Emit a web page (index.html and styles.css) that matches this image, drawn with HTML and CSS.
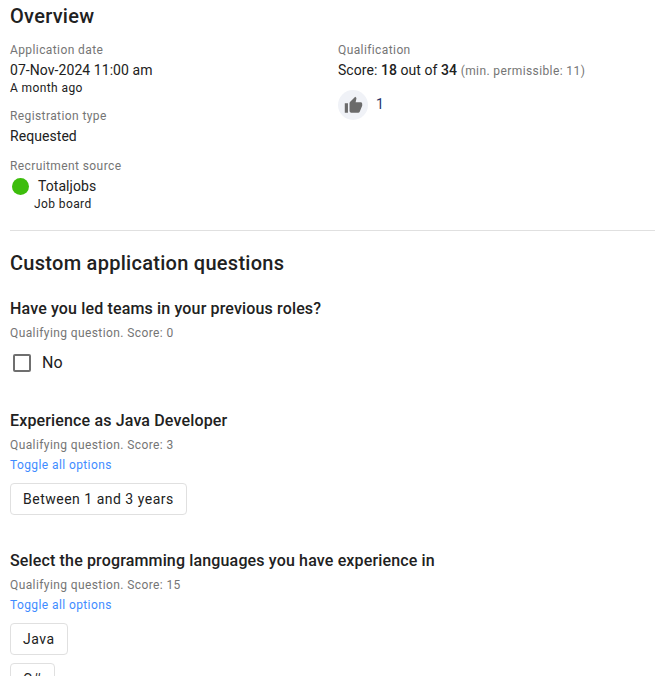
FILE: index.html
```html
<!DOCTYPE html>
<html lang="en">
<head>
<meta charset="utf-8">
<title>Overview</title>
<link rel="stylesheet" href="styles.css">
</head>
<body>
<main class="page">
  <h2 class="h1 overview-title">Overview</h2>
  <section class="overview">
    <div class="col">
      <div class="field">
        <div class="label">Application date</div>
        <div class="value">07-Nov-2024 11:00 am</div>
        <div class="sub">A month ago</div>
      </div>
      <div class="field">
        <div class="label">Registration type</div>
        <div class="value">Requested</div>
      </div>
      <div class="field last">
        <div class="label">Recruitment source</div>
        <div class="source">
          <span class="dot"></span>
          <span class="value">Totaljobs</span>
        </div>
        <div class="sub indent">Job board</div>
      </div>
    </div>
    <div class="col">
      <div class="label">Qualification</div>
      <div class="value">Score: <span class="medium">18</span> out of <span class="medium">34</span> <span class="min">(min. permissible: 11)</span></div>
      <div class="likes">
        <span class="thumb">
          <svg width="20" height="20" viewBox="0 0 24 24" aria-hidden="true"><path fill="#6b6b6b" d="M1 21h4V9H1v12zm22-11c0-1.1-.9-2-2-2h-6.31l.95-4.57.03-.32c0-.41-.17-.79-.44-1.06L14.17 1 7.59 7.59C7.22 7.95 7 8.45 7 9v10c0 1.1.9 2 2 2h9c.83 0 1.54-.5 1.84-1.22l3.02-7.05c.09-.23.14-.47.14-.73v-2z"/></svg>
        </span>
        <span class="count">1</span>
      </div>
    </div>
  </section>
  <hr class="rule">
  <h2 class="h1 custom-title">Custom application questions</h2>
  <section class="question q1">
    <h3 class="h2">Have you led teams in your previous roles?</h3>
    <div class="meta">Qualifying question. Score: 0</div>
    <div class="check"><span class="box"></span><span class="check-label">No</span></div>
  </section>
  <section class="question q2">
    <h3 class="h2">Experience as Java Developer</h3>
    <div class="meta">Qualifying question. Score: 3</div>
    <a class="toggle" href="#">Toggle all options</a>
    <div class="options"><span class="chip">Between 1 and 3 years</span></div>
  </section>
  <section class="question q3">
    <h3 class="h2">Select the programming languages you have experience in</h3>
    <div class="meta">Qualifying question. Score: 15</div>
    <a class="toggle" href="#">Toggle all options</a>
    <div class="options"><span class="chip">Java</span><span class="chip">C#</span></div>
  </section>
</main>
</body>
</html>
```
FILE: styles.css
```css
html, body { margin: 0; padding: 0; height: 676px; overflow: hidden; background: #fff; }
body { font-family: Roboto, "Liberation Sans", sans-serif; color: #212121; }
.page { padding: 0 0 0 10px; }
.h1 { margin: 0; font-size: 20px; line-height: 24px; font-weight: 500; letter-spacing: 0.28px; color: #212121; }
.overview-title { padding-top: 4px; }
.overview { display: flex; margin-top: 14px; }
.col { width: 328px; flex: none; }
.field { margin-bottom: 12px; }
.field.last { margin-bottom: 0; }
.label { font-size: 12px; line-height: 16px; letter-spacing: 0.4px; color: #757575; margin-bottom: 2px; }
.value { font-size: 14px; line-height: 20px; letter-spacing: 0.06px; color: #212121; }
.sub { font-size: 12px; line-height: 16px; letter-spacing: 0.4px; color: #212121; }
.indent { padding-left: 24px; margin-top: 0; }
.medium { font-weight: 500; }
.min { font-size: 12px; letter-spacing: 0.4px; color: #757575; }
.source { display: flex; align-items: center; gap: 9px; padding-left: 2px; }
.dot { width: 17px; height: 17px; border-radius: 50%; background: #3dbd0c; flex: none; }
.likes { display: flex; align-items: center; gap: 8px; margin-top: 9px; }
.thumb { width: 30px; height: 30px; border-radius: 50%; background: #f0f2f7; display: flex; align-items: center; justify-content: center; }
.thumb svg { width: 19px; height: 19px; }
.count { font-size: 14px; color: #27346b; margin-top: -2px; }
.rule { border: 0; border-top: 1px solid #e0e0e0; margin: 18px 0 0; width: 645px; }
.custom-title { margin-top: 20px; }
.h2 { margin: 0; font-size: 16px; line-height: 20px; font-weight: 500; letter-spacing: 0.15px; color: #212121; }
.question { display: block; }
.q1 { margin-top: 24px; }
.q2 { margin-top: 36px; }
.q3 { margin-top: 36px; }
.meta { font-size: 12px; line-height: 16px; letter-spacing: 0.4px; color: #757575; margin-top: 6px; }
.toggle { display: block; font-size: 12px; line-height: 16px; letter-spacing: 0.4px; color: #3f8cff; text-decoration: none; margin-top: 4px; }
.check { display: flex; align-items: center; gap: 11px; margin-top: 10px; padding-left: 3px; }
.box { width: 14px; height: 14px; border: 2px solid #6f6f6f; border-radius: 2px; flex: none; }
.check-label { font-size: 16px; line-height: 24px; letter-spacing: 0.15px; color: #212121; }
.options { display: flex; flex-direction: column; align-items: flex-start; gap: 8px; margin-top: 10px; }
.chip { box-sizing: border-box; height: 32px; padding: 0 12px; display: flex; align-items: center; border: 1px solid #e0e0e0; border-radius: 4px; font-size: 14px; letter-spacing: 0.5px; color: #212121; background: #fff; }
```
